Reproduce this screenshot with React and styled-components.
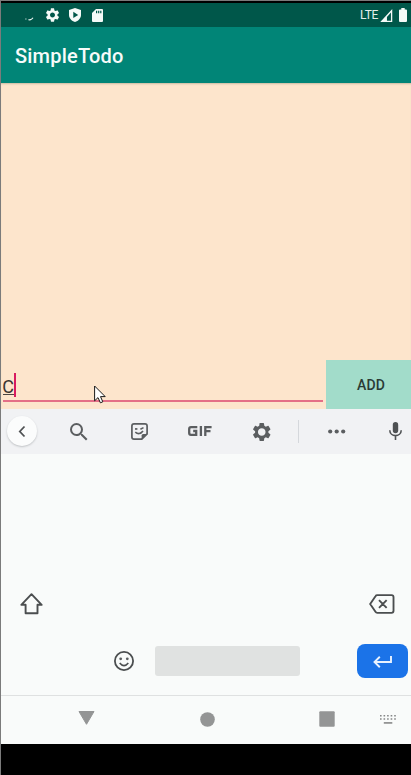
import React from "react";
import styled, { createGlobalStyle } from "styled-components";

const GlobalStyle = createGlobalStyle`
  * { box-sizing: border-box; }
  body { margin: 0; background: #000; overflow: hidden; }
`;

const Screen = styled.main`
  display: flex;
  flex-direction: column;
  width: 411px;
  height: 775px;
  padding-top: 2px;
  border-top: 1px solid #7b7b7b;
  border-left: 1px solid #7b7b7b;
  background: #000;
  font-family: Roboto, "Open Sans", sans-serif;
`;

const Glyph = styled.svg`
  display: block;
  flex: none;
  width: ${(p) => p.$w}px;
  height: ${(p) => p.$h}px;
  margin-left: ${(p) => p.$gap || 0}px;
  margin-top: ${(p) => p.$drop || 0}px;
  fill: ${(p) => p.$color || "#5b5e60"};
  overflow: visible;
`;

const StatusBar = styled.header`
  display: flex;
  align-items: center;
  flex: none;
  height: 24px;
  background: #00574a;
`;

const Network = styled.span`
  width: 18px;
  margin: 0 0 0 257px;
  font-size: 12px;
  line-height: 24px;
  letter-spacing: -0.2px;
  color: #e4eeec;
`;

const AppBar = styled.div`
  display: flex;
  align-items: center;
  flex: none;
  height: 56px;
  padding: 2px 0 0 14px;
  background: #018577;
`;

const Title = styled.h1`
  margin: 0;
  font-size: 20px;
  font-weight: 500;
  line-height: 24px;
  letter-spacing: 0.2px;
  color: #f7fbfa;
`;

const TodoList = styled.section`
  display: flex;
  flex-direction: column;
  justify-content: flex-end;
  position: relative;
  flex: none;
  height: 326px;
  background: #fde5cc;
  box-shadow: inset 0 2px 2px -1px #c9bca2;
`;

const EntryRow = styled.div`
  display: flex;
  height: 49px;
`;

const Field = styled.div`
  display: flex;
  align-items: flex-start;
  width: 320px;
  height: 29px;
  margin: 13px 3px 0 2px;
  border-bottom: 2px solid #e46f87;
`;

const Typed = styled.span`
  height: 22px;
  width: 11px;
  border-bottom: 1px solid #4b4541;
  font-size: 18px;
  line-height: 27px;
  text-indent: -0.8px;
  color: #3b3632;
`;

const Caret = styled.span`
  width: 2px;
  height: 24px;
  background: #d81b60;
`;

const AddButton = styled.button`
  flex: 1;
  height: 49px;
  padding: 1px 0 0 5px;
  border: 0;
  background: #a2dcca;
  font: 500 14px/20px Roboto, sans-serif;
  letter-spacing: 0.1px;
  color: #2a3b36;
`;

const Pointer = styled.svg`
  position: absolute;
  left: 93px;
  top: 302px;
  width: 13px;
  height: 19px;
`;

const Toolbar = styled.div`
  display: flex;
  align-items: center;
  flex: none;
  height: 45px;
  background: #f1f2f4;
`;

const BackButton = styled.div`
  display: flex;
  align-items: center;
  justify-content: center;
  flex: none;
  width: 30px;
  height: 30px;
  margin-left: 6px;
  margin-top: -1px;
  border-radius: 50%;
  background: #fbfcfc;
  box-shadow: 0 1px 2px #bfc2c5;
`;

const Divider = styled.span`
  width: 1px;
  height: 23px;
  margin-left: 27px;
  background: #d5d8dc;
`;

const Keyboard = styled.div`
  flex: none;
  height: 241px;
  padding-top: 133px;
  background: #f9fbfa;
`;

const KeyRow = styled.div`
  display: flex;
  align-items: center;
  height: 34px;
  margin-bottom: 23px;
`;

const SpaceKey = styled.div`
  width: 145px;
  height: 30px;
  margin-left: 21px;
  border-radius: 3px;
  background: #e0e2e1;
`;

const EnterKey = styled.div`
  display: flex;
  align-items: center;
  justify-content: center;
  width: 51px;
  height: 34px;
  margin-left: 57px;
  border-radius: 8px;
  background: #1b73e8;
`;

const NavBar = styled.nav`
  display: flex;
  align-items: center;
  flex: none;
  height: 49px;
  border-top: 1px solid #dfe1e1;
  background: #f9fbfa;
`;

const GEAR =
  "M19.14 12.94c.04-.3.06-.61.06-.94 0-.32-.02-.64-.07-.94l2.03-1.58a.49.49 0 0 0 .12-.61l-1.92-3.32a.488.488 0 0 0-.59-.22l-2.39.96c-.5-.38-1.03-.7-1.62-.94l-.36-2.54a.484.484 0 0 0-.48-.41h-3.84c-.24 0-.43.17-.47.41l-.36 2.54c-.59.24-1.13.57-1.62.94l-2.39-.96c-.22-.08-.47 0-.59.22L2.74 8.87c-.12.21-.08.47.12.61l2.03 1.58c-.05.3-.09.63-.09.94s.02.64.07.94l-2.03 1.58a.49.49 0 0 0-.12.61l1.92 3.32c.12.22.37.29.59.22l2.39-.96c.5.38 1.03.7 1.62.94l.36 2.54c.05.24.24.41.48.41h3.84c.24 0 .44-.17.47-.41l.36-2.54c.59-.24 1.13-.56 1.62-.94l2.39.96c.22.08.47 0 .59-.22l1.92-3.32c.12-.22.07-.47-.12-.61l-2.01-1.58zM12 15.6c-1.98 0-3.6-1.62-3.6-3.6s1.62-3.6 3.6-3.6 3.6 1.62 3.6 3.6-1.62 3.6-3.6 3.6z";

const GEAR_WIDE =
  GEAR.slice(0, GEAR.indexOf("zM12 15.6")) +
  "zM12 16.1c-2.27 0-4.1-1.83-4.1-4.1s1.83-4.1 4.1-4.1 4.1 1.83 4.1 4.1-1.83 4.1-4.1 4.1z";

const WHITE = "#f5faf8";

export default function App() {
  return (
    <>
      <GlobalStyle />
      <Screen>
        <StatusBar>
          <Glyph $w={9} $h={5} $gap={24} $drop={8} $color={WHITE} viewBox="0 0 9 5">
            <rect x="0.4" y="1.5" width="1" height="1" />
            <path d="M3.4 2.8 5 2.9C6.4 2.7 7.2 2 8 .8" fill="none" stroke={WHITE} strokeWidth="1.1" />
          </Glyph>
          <Glyph $w={13} $h={14} $gap={12} $color={WHITE} viewBox="2.6 2.3 18.8 19.4">
            <path d={GEAR} fillRule="evenodd" />
          </Glyph>
          <Glyph $w={12} $h={14} $gap={10} $color={WHITE} viewBox="0 0 12 14">
            <path fillRule="evenodd" d="M6 0 12 2V7C12 10.2 9.4 13 6 14 2.6 13 0 10.2 0 7V2ZM4.3 3.8V10L9.2 6.9Z" />
          </Glyph>
          <Glyph $w={11} $h={13} $gap={11} $color={WHITE} viewBox="0 0 11 13">
            <path fillRule="evenodd" d="M4 0H10Q11 0 11 1V12Q11 13 10 13H1Q0 13 0 12V4ZM4 1.7V4.2H5.2V1.7ZM6.1 1.7V4.2H7.3V1.7ZM8.2 1.7V4.2H9.4V1.7Z" />
          </Glyph>
          <Network>LTE</Network>
          <Glyph $w={12.5} $h={13} $gap={1.5} $color={WHITE} viewBox="0 0 12 13">
            <path fillRule="evenodd" d="M12 0V13H0ZM10.7 3.6 6.7 7.9V11.7H10.7Z" />
          </Glyph>
          <Glyph $w={8} $h={14} $gap={7} $color={WHITE} viewBox="0 0 8 14">
            <path d="M2.3 0H5.7V1.5H7Q8 1.5 8 2.5V13Q8 14 7 14H1Q0 14 0 13V2.5Q0 1.5 1 1.5H2.3Z" />
          </Glyph>
        </StatusBar>
        <AppBar>
          <Title>SimpleTodo</Title>
        </AppBar>
        <TodoList>
          <EntryRow>
            <Field>
              <Typed>C</Typed>
              <Caret />
            </Field>
            <AddButton>ADD</AddButton>
          </EntryRow>
          <Pointer viewBox="0 0 13 19">
            <path d="M.6 1V15.8L4 12.6 6.4 17.8 8.8 16.8 6.5 11.6H11.2Z" fill="#fff" stroke="#191919" />
          </Pointer>
        </TodoList>
        <Toolbar>
          <BackButton>
            <Glyph $w={6} $h={11} viewBox="0 0 6 11">
              <path d="M5.5.5.8 5.5 5.5 10.5" fill="none" stroke="#4f5254" strokeWidth="1.8" />
            </Glyph>
          </BackButton>
          <Glyph $w={17.5} $h={17.5} $gap={33} viewBox="3 3 17.5 17.5">
            <path d="M15.5 14h-.79l-.28-.27A6.47 6.47 0 0 0 16 9.5 6.5 6.5 0 1 0 9.5 16c1.61 0 3.09-.59 4.23-1.57l.27.28v.79l5 4.99L20.49 19zm-6 0C7.01 14 5 11.99 5 9.5S7.01 5 9.5 5 14 7.01 14 9.5 11.99 14 9.5 14z" />
          </Glyph>
          <Glyph $w={17} $h={17} $gap={43} $drop={-1} viewBox="0 0 17 17">
            <path d="M3 .9H14Q16.1.9 16.1 3V10.8L10.8 16.1H3Q.9 16.1.9 14V3Q.9.9 3 .9Z" fill="none" stroke="#5b5e60" strokeWidth="1.7" />
            <path d="M10.6 16.5V12.6Q10.6 11 12.2 11H16.5Z" />
            <rect x="4" y="5.1" width="2.4" height="1.7" />
            <path d="M9.4 6.2 12.5 4.6M4.3 9.2Q8.4 12.5 12 7.9" fill="none" stroke="#5b5e60" strokeWidth="1.6" />
          </Glyph>
          <Glyph $w={24} $h={10} $gap={40} $drop={-1} viewBox="0 0 24 10" role="img" aria-label="GIF">
            <path d="M9.3 1.2H3Q1.2 1.2 1.2 3V7Q1.2 8.8 3 8.8H8.2V5H5.2M12.9 0V10M17.3 10V1.2H23.6M17.3 5.2H22.5" fill="none" stroke="#5b5e60" strokeWidth="2.3" />
          </Glyph>
          <Glyph $w={17.5} $h={18} $gap={41.5} $drop={1} viewBox="2.6 2.3 18.8 19.4">
            <path d={GEAR_WIDE} fillRule="evenodd" />
          </Glyph>
          <Divider />
          <Glyph $w={18} $h={5} $gap={29} viewBox="0 0 18 5">
            <circle cx="2.2" cy="2.5" r="2.1" />
            <circle cx="8.7" cy="2.5" r="2.1" />
            <circle cx="15.2" cy="2.5" r="2.1" />
          </Glyph>
          <Glyph $w={13} $h={18} $gap={43.5} $drop={-1} $color="#4e5153" viewBox="0 0 13 18">
            <rect x="3.8" y="0" width="5.4" height="11.2" rx="2.7" />
            <path d="M.8 8.2C.8 15.4 12.2 15.4 12.2 8.2M6.5 13.6V18" fill="none" stroke="#4e5153" strokeWidth="1.6" />
          </Glyph>
        </Toolbar>
        <Keyboard>
          <KeyRow>
            <Glyph $w={23} $h={22} $gap={19} $drop={-1} viewBox="0 0 23 22">
              <path d="M11.5 1.2 21.7 11.8H17.5V20.3H5.6V11.8H1.3Z" fill="none" stroke="#4b4e4f" strokeWidth="1.9" strokeLinejoin="round" />
            </Glyph>
            <Glyph $w={25.5} $h={20} $gap={326.3} viewBox="0 0 26 20">
              <path d="M8.4 1H23Q25 1 25 3V17Q25 19 23 19H8.4Q7.2 19 6.6 18L1.2 10 6.6 2Q7.2 1 8.4 1ZM10.2 6 18 14M18 6 10.2 14" fill="none" stroke="#4b4e4f" strokeWidth="1.9" />
            </Glyph>
          </KeyRow>
          <KeyRow>
            <Glyph $w={20} $h={20} $gap={113} viewBox="0 0 20 20">
              <circle cx="10" cy="10" r="9.1" fill="none" stroke="#4b4e4f" strokeWidth="1.8" />
              <circle cx="6.7" cy="7.8" r="1.4" />
              <circle cx="13.3" cy="7.8" r="1.4" />
              <path d="M5.7 12Q10 17.3 14.3 12" fill="none" stroke="#4b4e4f" strokeWidth="1.6" />
            </Glyph>
            <SpaceKey />
            <EnterKey>
              <Glyph $w={19} $h={12} $drop={1} viewBox="0 0 19 12">
                <path d="M18 0V6H1.5M6.8.8 1.5 6 6.8 11.2" fill="none" stroke="#e8f2ff" strokeWidth="1.9" />
              </Glyph>
            </EnterKey>
          </KeyRow>
        </Keyboard>
        <NavBar>
          <Glyph $w={17} $h={14} $gap={77} $drop={-4} $color="#949595" viewBox="0 0 17 14">
            <path d="M1 .5H16L8.5 13.3Z" stroke="#949595" strokeLinejoin="round" />
          </Glyph>
          <Glyph $w={15} $h={15} $gap={104.5} $drop={-2} $color="#949595" viewBox="0 0 15 15">
            <circle cx="7.5" cy="7.5" r="7.3" />
          </Glyph>
          <Glyph $w={16} $h={16} $gap={104.5} $drop={-2} $color="#949595" viewBox="0 0 16 16">
            <rect x="0.3" y="0.3" width="15.4" height="15.4" rx="1" />
          </Glyph>
          <Glyph $w={16} $h={9} $gap={44.5} $drop={-1} $color="#949595" viewBox="0 0 16 9">
            <path d="M0 .8H16M0 4H16" stroke="#858787" strokeWidth="1.5" strokeDasharray="1.6 1.95" />
            <rect x="3.8" y="7" width="8.5" height="1.8" />
          </Glyph>
        </NavBar>
      </Screen>
    </>
  );
}
